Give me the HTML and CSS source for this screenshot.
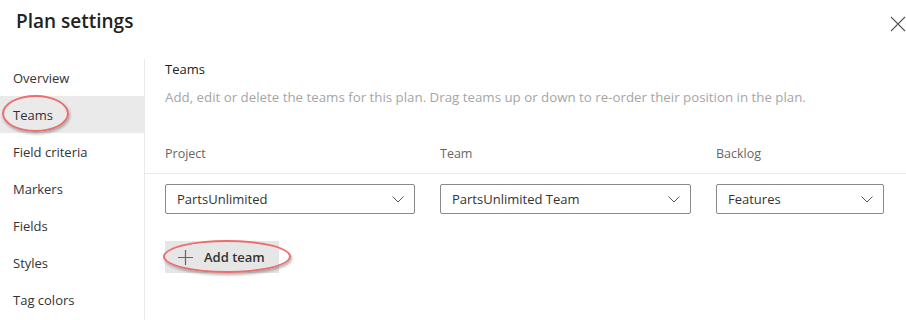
FILE: index.html
```html
<!DOCTYPE html>
<html>
<head>
    <title>Plan settings</title>
    <link rel="stylesheet" href="styles.css">
</head>
<body>
    <div class="dialog">
        <div class="dialog-header">
            <h1>Plan settings</h1>
            <button class="close" aria-label="Close">
                <svg width="16" height="16" viewBox="0 0 16 16"><path d="M1 1L15 15M15 1L1 15" stroke="#555" stroke-width="1.1" fill="none"/></svg>
            </button>
        </div>
        <div class="dialog-body">
            <ul class="nav">
                <li>Overview</li>
                <li class="selected">Teams<span class="mark mark-nav"></span></li>
                <li>Field criteria</li>
                <li>Markers</li>
                <li>Fields</li>
                <li>Styles</li>
                <li>Tag colors</li>
            </ul>
            <div class="content">
                <h2>Teams</h2>
                <p class="desc">Add, edit or delete the teams for this plan. Drag teams up or down to re-order their position in the plan.</p>
                <div class="grid grid-head">
                    <div>Project</div>
                    <div>Team</div>
                    <div>Backlog</div>
                </div>
                <div class="grid grid-row">
                    <div class="dropdown">PartsUnlimited<svg class="chev" width="12" height="7" viewBox="0 0 12 7"><path d="M0.5 0.5L6 6L11.5 0.5" stroke="#555" fill="none"/></svg></div>
                    <div class="dropdown">PartsUnlimited Team<svg class="chev" width="12" height="7" viewBox="0 0 12 7"><path d="M0.5 0.5L6 6L11.5 0.5" stroke="#555" fill="none"/></svg></div>
                    <div class="dropdown">Features<svg class="chev" width="12" height="7" viewBox="0 0 12 7"><path d="M0.5 0.5L6 6L11.5 0.5" stroke="#555" fill="none"/></svg></div>
                </div>
                <div class="add-wrap">
                    <button class="add-team">
                        <svg width="15" height="15" viewBox="0 0 15 15"><path d="M7.5 0V15M0 7.5H15" stroke="#666" stroke-width="1.2" fill="none"/></svg>
                        Add team
                    </button>
                    <span class="mark mark-btn"></span>
                </div>
            </div>
        </div>
    </div>
</body>
</html>
```

FILE: styles.css
```css
body {
    font-family: 'Segoe UI', 'Open Sans', sans-serif;
    margin: 0;
    background: white;
    color: #333;
    font-size: 13px;
}
.dialog {
    width: 906px;
    height: 320px;
    overflow: hidden;
}
.dialog-header {
    display: flex;
    justify-content: space-between;
    align-items: flex-start;
    height: 59px;
}
h1 {
    margin: 8px 0 0 16px;
    font-size: 19px;
    font-weight: 600;
    color: #222;
}
.close {
    background: none;
    border: none;
    padding: 0;
    margin: 16px 0 0 0;
    width: 17px;
    height: 16px;
    cursor: pointer;
}
.dialog-body {
    display: flex;
}
.nav {
    list-style: none;
    margin: 0;
    padding: 0;
    width: 144px;
    border-right: 1px solid #eaeaea;
    height: 261px;
}
.nav li {
    height: 37px;
    line-height: 38px;
    padding-left: 13px;
    color: #333;
    position: relative;
}
.nav li.selected {
    background: #eaeaea;
}
.content {
    flex: 1;
}
h2 {
    margin: 0;
    padding: 0 0 0 20px;
    font-size: 13px;
    font-weight: 400;
    line-height: 20px;
    color: #222;
}
.desc {
    margin: 8px 0 0 0;
    padding-left: 20px;
    color: #a6a6a6;
    line-height: 20px;
    font-size: 13.3px;
}
.grid {
    display: grid;
    grid-template-columns: 250px 251px 168px;
    column-gap: 25px;
    padding-left: 20px;
}
.grid-head {
    margin-top: 27px;
    height: 39px;
    line-height: 39px;
    color: #666;
    border-bottom: 1px solid #eaeaea;
    font-size: 12.5px;
}
.grid-row {
    margin-top: 10px;
}
.dropdown {
    height: 30px;
    border: 1px solid #8a8a8a;
    border-radius: 2px;
    box-sizing: border-box;
    display: flex;
    align-items: center;
    justify-content: space-between;
    padding: 0 10px 0 11px;
    color: #333;
}
.add-wrap {
    position: relative;
    margin: 27px 0 0 20px;
    width: 114px;
}
.add-team {
    display: flex;
    align-items: center;
    gap: 11px;
    height: 32px;
    width: 114px;
    padding: 0 0 0 13px;
    border: none;
    background: #e6e6e6;
    font-family: inherit;
    font-size: 13px;
    font-weight: 600;
    color: #333;
}
.mark {
    position: absolute;
    border: 2.5px solid #ea6e6e;
    border-radius: 50%;
    box-sizing: border-box;
    box-shadow: 1px 2px 3px rgba(0,0,0,0.3);
}
.mark-nav {
    left: 2px;
    top: -1px;
    width: 67px;
    height: 37px;
}
.mark-btn {
    left: -2px;
    top: -1px;
    width: 128px;
    height: 33px;
}
```
